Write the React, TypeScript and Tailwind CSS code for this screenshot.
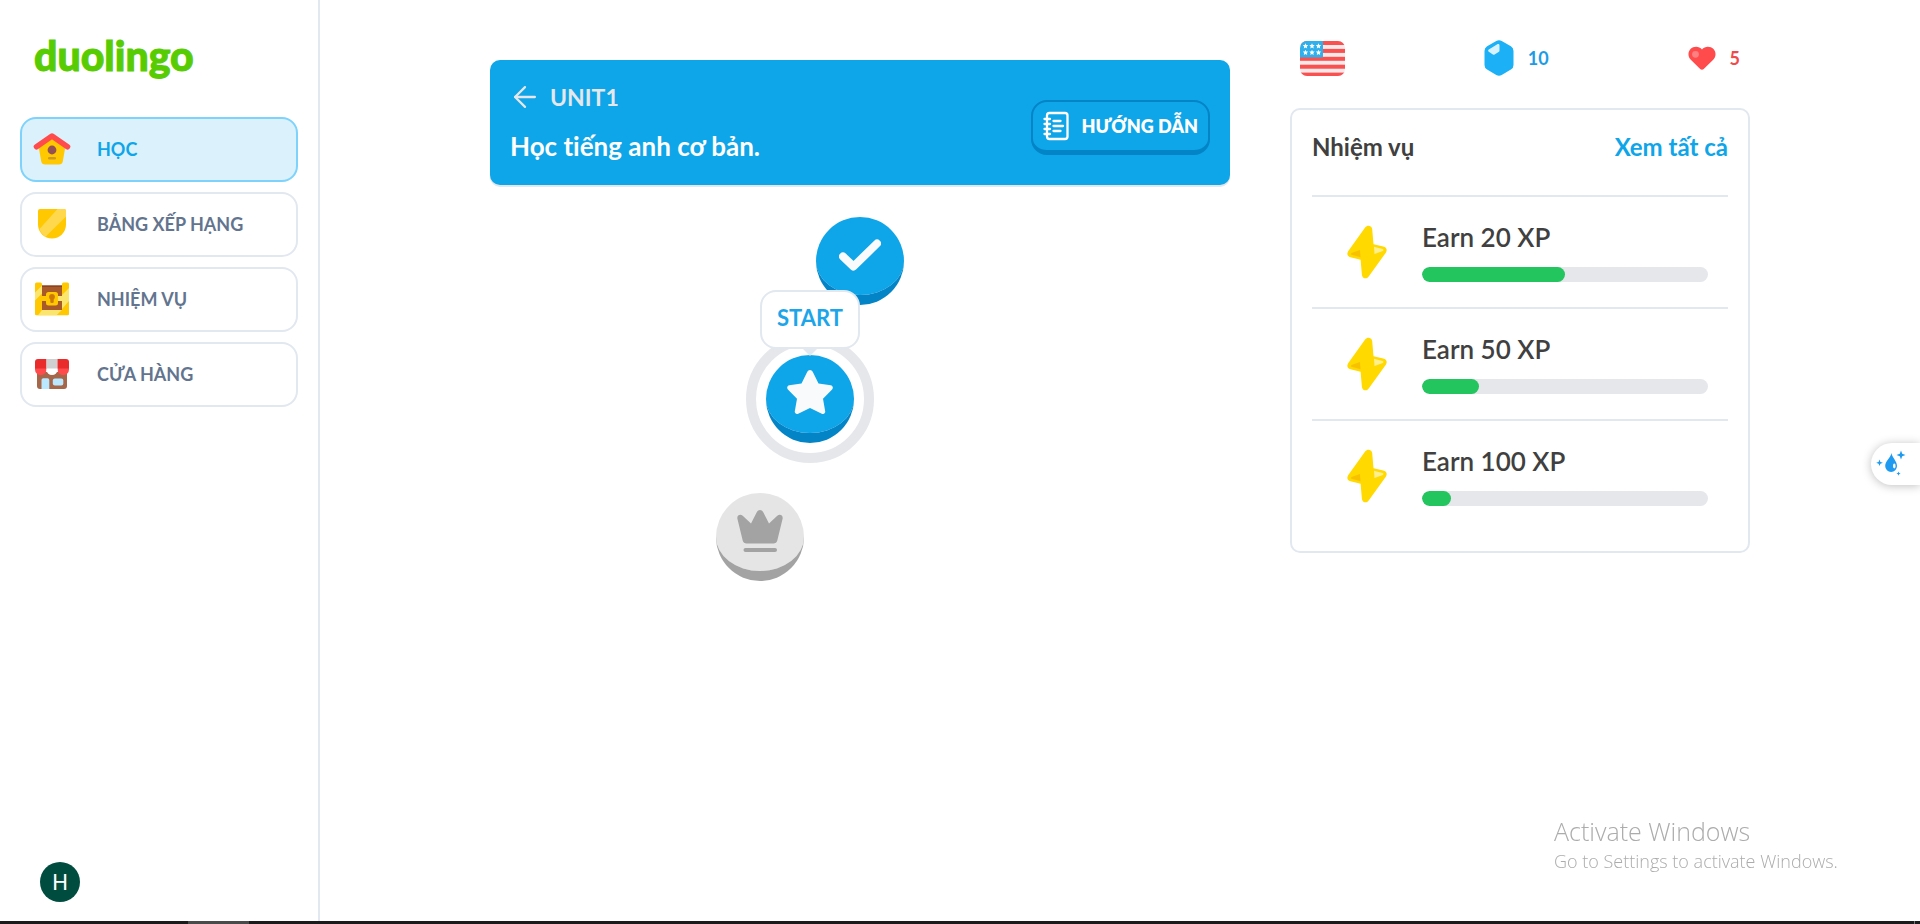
import type { ReactNode } from 'react'
import { ArrowLeft } from 'lucide-react'

function HouseIcon() {
  return (
    <svg viewBox="0 0 38 34" className="h-[34px] w-[38px]" aria-hidden="true">
      <path d="M5.5 14 19 5l13.500 9-2.700 15.200a4 4 0 0 1-4 3.300H12.200a4 4 0 0 1-4-3.300Z" fill="#ffc800" />
      <path d="M3.500 14.700 19 4l15.500 10.700" fill="none" stroke="#ff4b4b" strokeWidth="5.600" strokeLinecap="round" strokeLinejoin="round" />
      <circle cx="19" cy="18" r="4.400" fill="#945151" />
      <rect x="15" y="25" width="8" height="2.600" rx="1.300" fill="#cd9a28" />
    </svg>
  )
}

function ShieldIcon() {
  return (
    <svg viewBox="0 0 38 34" className="h-[34px] w-[38px]" aria-hidden="true">
      <path d="M7 2h24a2 2 0 0 1 2 2v13.500a14 14 0 0 1-28 0V4a2 2 0 0 1 2-2Z" fill="#ffc800" />
      <path d="M24.500 2H31a2 2 0 0 1 2 2v5.500L12.500 29.800A14 14 0 0 1 6.500 22Z" fill="#ffd84d" />
    </svg>
  )
}

function ChestIcon() {
  return (
    <svg viewBox="0 0 38 34" className="h-[34px] w-[38px]" aria-hidden="true">
      <rect x="7" y="3.500" width="24" height="27.500" fill="#a85a2b" />
      <rect x="7" y="3.500" width="24" height="1.500" fill="#8a4520" />
      <path d="M2 2a1.500 1.500 0 0 1 1.500-1.500h4A1.500 1.500 0 0 1 9 2v12h6v5H9v9h20v-9h-6v-5h6V2A1.500 1.500 0 0 1 30.500.500h4A1.500 1.500 0 0 1 36 2v30a1.300 1.300 0 0 1-1.300 1.300H3.300A1.300 1.300 0 0 1 2 32Z" fill="#ffc800" />
      <path d="M2 10.500 9 3.500v8l-7 7ZM9 28h20l-5.500 5.300H5ZM29 14h-5v5h5ZM29 13l7-7v13l-7 8Z" fill="#fbe56d" />
      <rect x="13" y="10" width="12" height="13.500" rx="2.500" fill="#ffc800" />
      <circle cx="19" cy="14.800" r="2.900" fill="#cd7900" />
      <rect x="17.300" y="15" width="3.400" height="6" rx="1.200" fill="#cd7900" />
    </svg>
  )
}

function ShopIcon() {
  return (
    <svg viewBox="0 0 38 34" className="h-[34px] w-[38px]" aria-hidden="true">
      <path d="M4 15h30v14a3 3 0 0 1-3 3H7a3 3 0 0 1-3-3Z" fill="#a5664a" />
      <path d="M8.500 23a1.800 1.800 0 0 1 1.800-1.800h4.200A1.800 1.800 0 0 1 16.300 23v9H8.500Z" fill="#bae8ff" />
      <rect x="19.800" y="21.500" width="10.500" height="7" rx="2" fill="#bae8ff" />
      <path d="M2 11h11.500v1.500a5.700 5.700 0 0 1-11.500 0ZM24.500 11H36v1.500a5.700 5.700 0 0 1-11.500 0Z" fill="#ff4b4b" />
      <path d="M13.500 11h11v1.500a5.500 5.500 0 0 1-11 0Z" fill="#fff" />
      <path d="M5 2h8.500v9.500H2V5a3 3 0 0 1 3-3Z" fill="#ea2b2b" />
      <path d="M13.500 2h11v9.500h-11Z" fill="#d0d0d0" />
      <path d="M24.500 2H33a3 3 0 0 1 3 3v6.500H24.500Z" fill="#ea2b2b" />
    </svg>
  )
}

function NotebookIcon() {
  return (
    <svg viewBox="0 0 26 30" className="h-[30px] w-[26px]" fill="none" stroke="#fff" strokeWidth="2.300" strokeLinecap="round" aria-hidden="true">
      <rect x="4" y="2" width="20.500" height="26" rx="2.500" />
      <path d="M1.500 8H7M1.500 13H7M1.500 18H7M1.500 23H7M10.500 10h7M10.500 15h9.500M10.500 20h7" />
    </svg>
  )
}

function FlagIcon() {
  const stars = [5.5, 12, 18.5]
  return (
    <svg viewBox="0 0 45 35" className="h-[35px] w-[45px]" role="img" aria-label="English">
      <clipPath id="flag-shape">
        <rect width="45" height="35" rx="7" />
      </clipPath>
      <g clipPath="url(#flag-shape)">
        <rect width="45" height="35" fill="#f4e9ea" />
        {[0, 1, 2, 3, 4].map((i) => (
          <rect key={i} y={i * 7.9} width="45" height="4" fill="#fa5050" />
        ))}
        <rect width="23" height="16.500" fill="#2fb0ec" />
        {[5, 11.5].map((y) =>
          stars.map((x) => (
            <path
              key={`${x}-${y}`}
              transform={`translate(${x} ${y})`}
              d="M0-2.800.800-1 2.700-.900 1.300.500 1.700 2.400 0 1.500-1.700 2.400-1.300.500-2.700-.900-.800-1Z"
              fill="#fff"
            />
          )),
        )}
      </g>
    </svg>
  )
}

function GemIcon() {
  return (
    <svg viewBox="0 0 30 36" className="h-9 w-[30px]" aria-hidden="true">
      <path d="M12.300 1a5.400 5.400 0 0 1 5.400 0l9.200 5.300A5.400 5.400 0 0 1 29.500 11v14a5.400 5.400 0 0 1-2.600 4.600L17.700 35a5.400 5.400 0 0 1-5.400 0L3.100 29.600A5.400 5.400 0 0 1 .500 25V11a5.400 5.400 0 0 1 2.600-4.700Z" fill="#1cb0f6" />
      <path d="M13.300 4.300c1-.600 2.200 0 2.200 1.100v5.200c0 .700-.300 1.200-.900 1.500l-4 2.300c-.500.300-1.200.300-1.700 0L4.800 11.800c-.900-.500-.900-1.800 0-2.300Z" fill="#d6f2ff" />
    </svg>
  )
}

function HeartIcon() {
  return (
    <svg viewBox="0 0 28 24" className="h-6 w-7" aria-hidden="true">
      <path d="M14 3.400C11.200-.200 5.500-.200 2.500 3c-2.900 3.200-2.600 7.800.300 10.700l9.400 9.200c1 1 2.500 1 3.500 0l9.500-9.200c2.900-2.900 3.200-7.500.300-10.700-3-3.200-8.700-3.200-11.500.400Z" fill="#ff4b4b" />
      <circle cx="7.500" cy="8.300" r="3.400" fill="#ff8080" />
    </svg>
  )
}

function BoltIcon() {
  return (
    <svg viewBox="0 0 40 54" className="h-[54px] w-10" aria-hidden="true">
      <path d="M18.300 2.300c2.200-3 6.700-1.700 6.900 2l1.300 15 9.700 2.200c3.300.700 4.500 3.500 2.600 6.200L21.700 51.500c-2.200 3.200-6.500 2-6.800-1.800l-1.300-15L3.500 32.300C.300 31.500-.500 28.700 1.300 26Z" fill="#ffd900" />
      <path d="m13 25 .500 7.300-8.800-2.500c-1-.300-1-1.200-.100-1.700Z" fill="#f7c100" />
      <path d="m27 21.800 8.500 2.200c1 .300 1.200 1.300.300 1.900L27.500 29Z" fill="#ffef8f" />
    </svg>
  )
}

function DropIcon() {
  return (
    <svg viewBox="0 0 30 28" className="h-7 w-[30px]" aria-hidden="true">
      <g fill="#1e9bf0">
        <path d="M15.500 3c.500 4.500 5.500 8 5.500 13a5.900 5.900 0 0 1-11.800 0C9.200 11 14.500 8 15.500 3Z" />
        <path d="m25 .500 1.200 3.300 3.300 1.200-3.300 1.200L25 9.500l-1.200-3.300L20.500 5l3.300-1.200ZM3.500 9.500l.900 2.400 2.500.900-2.500.900-.900 2.400-.900-2.400L.200 12.800l2.400-.900ZM22.500 21.500l.600 1.500 1.500.600-1.500.600-.600 1.500-.600-1.500-1.500-.600 1.500-.600Z" />
      </g>
      <ellipse cx="18.300" cy="16" rx="1.300" ry="2.400" fill="#fff" />
    </svg>
  )
}

const navItems: { label: string; icon: ReactNode; active?: boolean }[] = [
  { label: 'HỌC', icon: <HouseIcon />, active: true },
  { label: 'BẢNG XẾP HẠNG', icon: <ShieldIcon /> },
  { label: 'NHIỆM VỤ', icon: <ChestIcon /> },
  { label: 'CỬA HÀNG', icon: <ShopIcon /> },
]

const quests = [
  { label: 'Earn 20 XP', progress: 50 },
  { label: 'Earn 50 XP', progress: 20 },
  { label: 'Earn 100 XP', progress: 10 },
]

function Sidebar() {
  return (
    <aside className="flex w-80 shrink-0 flex-col border-r-2 border-slate-200 px-5 pb-[19px] pt-8">
      <a href="#" className="pl-3.5 text-[41px] font-black leading-[48px] text-[#58cc02] [-webkit-text-stroke:1px_#58cc02]">
        duolingo
      </a>
      <nav className="mt-[37px] flex flex-col gap-2.5">
        {navItems.map((item) => (
          <a
            key={item.label}
            href="#"
            className={
              item.active
                ? 'flex h-[65px] items-center gap-[26px] rounded-2xl border-2 border-[#7dd3fc] bg-[#dbf1fc] px-[11px] pb-0.5 text-lg font-bold text-[#0ea5e9]'
                : 'flex h-[65px] items-center gap-[26px] rounded-2xl border-2 border-slate-200 px-[11px] pb-0.5 text-lg font-bold text-slate-500'
            }
          >
            {item.icon}
            {item.label}
          </a>
        ))}
      </nav>
      <button
        type="button"
        aria-label="Account"
        className="ml-5 mt-auto flex size-10 items-center justify-center rounded-full bg-[#004d40] font-['Roboto',sans-serif] text-[22px] text-white"
      >
        H
      </button>
    </aside>
  )
}

function UnitBanner() {
  return (
    <header className="flex h-[125px] items-center justify-between rounded-[10px] bg-[#0ea5e9] px-5 shadow-[0_2px_0_#e2e8f0]">
      <div className="flex flex-col gap-4 pb-1">
        <a href="#" className="flex items-center gap-2 text-[23px] font-bold leading-8 text-gray-200">
          <ArrowLeft className="-ml-0.5 size-[34px]" strokeWidth={1.6} />
          UNIT1
        </a>
        <h1 className="text-[26px] font-bold leading-8 text-white">Học tiếng anh cơ bản.</h1>
      </div>
      <button
        type="button"
        className="mt-2.5 flex h-[55px] items-center gap-3 rounded-2xl border-2 border-b-[5px] border-[#0284c7] px-2.5 text-lg font-extrabold text-white"
      >
        <NotebookIcon />
        HƯỚNG DẪN
      </button>
    </header>
  )
}

function LessonPath() {
  return (
    <div className="mt-8 flex flex-col items-center gap-[50px]">
      <button
        type="button"
        aria-label="Completed lesson"
        className="flex size-[88px] items-center justify-center rounded-full border-b-[10px] border-[#0284c7] bg-[#0ea5e9] bg-clip-padding pb-0.5"
      >
        <svg viewBox="0 0 42 32" className="h-8 w-[42px]" fill="none" stroke="#f8fafc" strokeWidth="8" strokeLinecap="round" strokeLinejoin="round" aria-hidden="true">
          <path d="M4 17.500 14.500 27.500 38 4.500" />
        </svg>
      </button>
      <div className="pr-[100px]">
        <div className="relative">
          <div className="absolute -inset-5 rounded-full border-[10px] border-gray-200" />
          <button
            type="button"
            aria-label="Start lesson"
            className="relative flex size-[88px] items-center justify-center rounded-full border-b-[10px] border-[#0284c7] bg-[#0ea5e9] bg-clip-padding pb-1"
          >
            <svg viewBox="0 0 46 44" className="h-11 w-[46px]" aria-hidden="true">
              <path
                d="M20.300 1.800a3 3 0 0 1 5.400 0L31.500 13.500l12.300 1.800a2.400 2.400 0 0 1 1.300 4.100L36 28.700l2.200 12.600a2.300 2.300 0 0 1-3.400 2.400L23 38 11.200 43.700a2.300 2.300 0 0 1-3.400-2.400L10 28.700.900 19.400a2.400 2.400 0 0 1 1.300-4.100l12.300-1.800Z"
                fill="#f8fafc"
              />
            </svg>
          </button>
          <div className="absolute -top-[65px] left-1/2 flex h-[59px] w-[100px] -translate-x-1/2 items-center justify-center rounded-2xl border-2 border-slate-200 bg-white pb-1 text-[22px] font-bold text-[#1da5ea]">
            START
            <svg viewBox="0 0 18 9" className="absolute top-full h-[9px] w-[18px]" aria-hidden="true">
              <path d="M0 0h18L9 9Z" fill="#e2e8f0" />
            </svg>
          </div>
        </div>
      </div>
      <div className="pr-[200px]">
        <button
          type="button"
          aria-label="Locked lesson"
          className="flex size-[88px] items-center justify-center rounded-full border-b-[10px] border-[#a3a3a3] bg-[#e5e5e5] bg-clip-padding pb-0.5"
        >
          <svg viewBox="0 0 46 42" className="h-[42px] w-[46px]" fill="#a3a3a3" aria-hidden="true">
            <path d="M20 1.800a3.400 3.400 0 0 1 6 0l6 11.700 8.300-7.700c2.500-2.300 6-.300 5.300 3L40.300 30.500a4 4 0 0 1-3.900 3H9.600a4 4 0 0 1-3.900-3L.400 8.800c-.700-3.300 2.800-5.300 5.300-3L14 13.500Z" />
            <rect x="6.500" y="38" width="33.500" height="4" rx="2" />
          </svg>
        </button>
      </div>
    </div>
  )
}

function Stats() {
  return (
    <div className="flex h-9 items-center justify-between px-2.5 text-lg font-bold">
      <FlagIcon />
      <div className="flex items-center gap-3.5 text-[#1d9ce5]">
        <GemIcon />
        10
      </div>
      <div className="flex items-center gap-3.5 text-[#f04a4a]">
        <HeartIcon />
        5
      </div>
    </div>
  )
}

function Quests() {
  return (
    <section className="mt-8 rounded-[10px] border-2 border-slate-200 px-5 pb-5">
      <div className="flex h-[85px] items-center justify-between pb-3 text-2xl font-bold">
        <h2 className="text-[#404040]">Nhiệm vụ</h2>
        <a href="#" className="text-[#0ea5e9]">Xem tất cả</a>
      </div>
      <ul>
        {quests.map((quest) => (
          <li key={quest.label} className="flex h-28 items-center gap-5 border-t-2 border-slate-200 px-5">
            <div className="flex w-[70px] shrink-0 justify-center">
              <BoltIcon />
            </div>
            <div className="flex flex-1 flex-col gap-3.5 pb-0.5">
              <span className="text-[26px] font-semibold leading-8 text-[#404040]">{quest.label}</span>
              <div
                role="progressbar"
                aria-label={quest.label}
                aria-valuenow={quest.progress}
                className="h-[15px] overflow-hidden rounded-full bg-gray-200"
              >
                <div className="h-full rounded-full bg-[#22c55e]" style={{ width: `${quest.progress}%` }} />
              </div>
            </div>
          </li>
        ))}
      </ul>
    </section>
  )
}

export default function App() {
  return (
    <div className="flex min-h-screen flex-col bg-white font-['Lato','Noto_Sans',sans-serif] [font-variant-ligatures:none]">
      <div className="flex flex-1">
        <Sidebar />
        <div className="flex-1 px-10">
          <div className="mx-auto flex max-w-[1260px] gap-[60px]">
            <main className="flex-1 pt-[60px]">
              <UnitBanner />
              <LessonPath />
            </main>
            <aside className="w-[460px] shrink-0 pt-10">
              <Stats />
              <Quests />
            </aside>
          </div>
        </div>
      </div>
      <footer className="flex h-[3px] justify-between bg-[#1c1a1a] pl-[188px] pr-[5px]">
        <div className="w-[61px] bg-[#4a4a4a]" />
        <div className="w-px bg-[#777]" />
      </footer>
      <button
        type="button"
        aria-label="Assistant"
        className="fixed right-0 top-[443px] flex h-[42px] w-[49px] items-center rounded-l-full bg-white pl-[5px] shadow-[0_1px_10px_rgba(0,0,0,0.25)]"
      >
        <DropIcon />
      </button>
      <div className="pointer-events-none fixed bottom-[49px] right-[82px] w-[284px] whitespace-nowrap font-['Open_Sans',sans-serif] text-[#acacac]">
        <p className="text-[25px] font-light leading-8">Activate Windows</p>
        <p className="text-lg font-light leading-7">Go to Settings to activate Windows.</p>
      </div>
    </div>
  )
}
